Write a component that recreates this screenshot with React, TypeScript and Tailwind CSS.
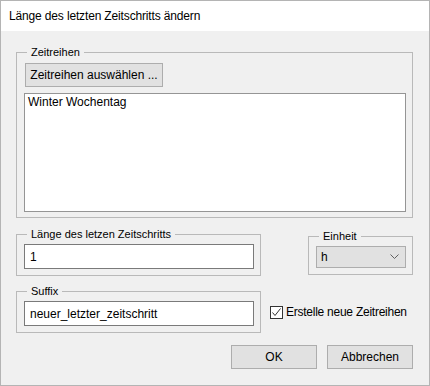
import type { ReactNode } from "react";

function GroupBox({
  label,
  className,
  children,
}: {
  label: string;
  className: string;
  children: ReactNode;
}) {
  return (
    <div className={`relative border border-[#b9b9b9] ${className}`}>
      <span className="absolute -top-[8px] left-[10px] bg-[#f0f0f0] px-[4px] text-[11px] leading-[14px] text-black">
        {label}
      </span>
      {children}
    </div>
  );
}

function TextBox({ value }: { value: string }) {
  return (
    <div className="flex h-[25px] w-[230px] items-center border border-[#7a7a7a] bg-white pl-[5px] text-[12px] text-black">
      {value}
    </div>
  );
}

function Button({ label, className }: { label: string; className: string }) {
  return (
    <button
      className={`flex h-[24px] items-center justify-center border border-[#adadad] bg-[#e1e1e1] text-[12px] text-black ${className}`}
    >
      {label}
    </button>
  );
}

export default function App() {
  return (
    <div className="flex h-[386px] w-[430px] flex-col border border-[#b4b4b4] font-['Liberation_Sans',Arial,sans-serif] text-black">
      {/* Titelleiste */}
      <div className="flex h-[30px] shrink-0 items-center bg-white pl-[8px] text-[12px] tracking-[-0.15px]">
        Länge des letzten Zeitschritts ändern
      </div>

      <div className="flex flex-1 flex-col bg-[#f0f0f0] pl-[15px] pr-[16px]">
        <GroupBox label="Zeitreihen" className="mt-[21px] h-[166px] w-[397px] pl-[7px] pt-[10px]">
          <Button label="Zeitreihen auswählen ..." className="ml-px w-[138px]" />
          <div className="mt-[6px] h-[119px] w-[382px] border border-[#959595] bg-white pl-[3px] pt-[1px] text-[12px] leading-[15px]">
            Winter Wochentag
          </div>
        </GroupBox>

        <div className="mt-[16px] flex items-center justify-between">
          <GroupBox label="Länge des letzen Zeitschritts" className="h-[42px] w-[245px] pl-[7px] pt-[9px]">
            <TextBox value="1" />
          </GroupBox>
          <GroupBox label="Einheit" className="h-[39px] w-[105px] pl-[7px] pt-[9px]">
            <div className="flex h-[22px] w-[90px] items-center justify-between border border-[#adadad] bg-[#e1e1e1] pl-[4px] pr-[6px] text-[12px]">
              <span>h</span>
              <svg width="9" height="5" viewBox="0 0 9 5" fill="none">
                <polyline points="0.5,0.5 4.5,4.5 8.5,0.5" stroke="#606060" strokeWidth="1" />
              </svg>
            </div>
          </GroupBox>
        </div>

        <div className="mt-[15px] flex items-center">
          <GroupBox label="Suffix" className="h-[42px] w-[245px] pl-[7px] pt-[9px]">
            <TextBox value="neuer_letzter_zeitschritt" />
          </GroupBox>
          <label className="ml-[9px] flex items-center gap-[3px] text-[12px] tracking-[-0.25px]">
            <span className="flex h-[13px] w-[13px] items-center justify-center border border-[#333333] bg-white">
              <svg width="11" height="11" viewBox="0 0 11 11" fill="none">
                <polyline points="1.5,5.5 4,8.5 9.5,1.5" stroke="#333333" strokeWidth="1" />
              </svg>
            </span>
            Erstelle neue Zeitreihen
          </label>
        </div>

        <div className="mt-[12px] flex justify-end gap-[10px]">
          <Button label="OK" className="w-[86px]" />
          <Button label="Abbrechen" className="w-[86px]" />
        </div>
      </div>
    </div>
  );
}
